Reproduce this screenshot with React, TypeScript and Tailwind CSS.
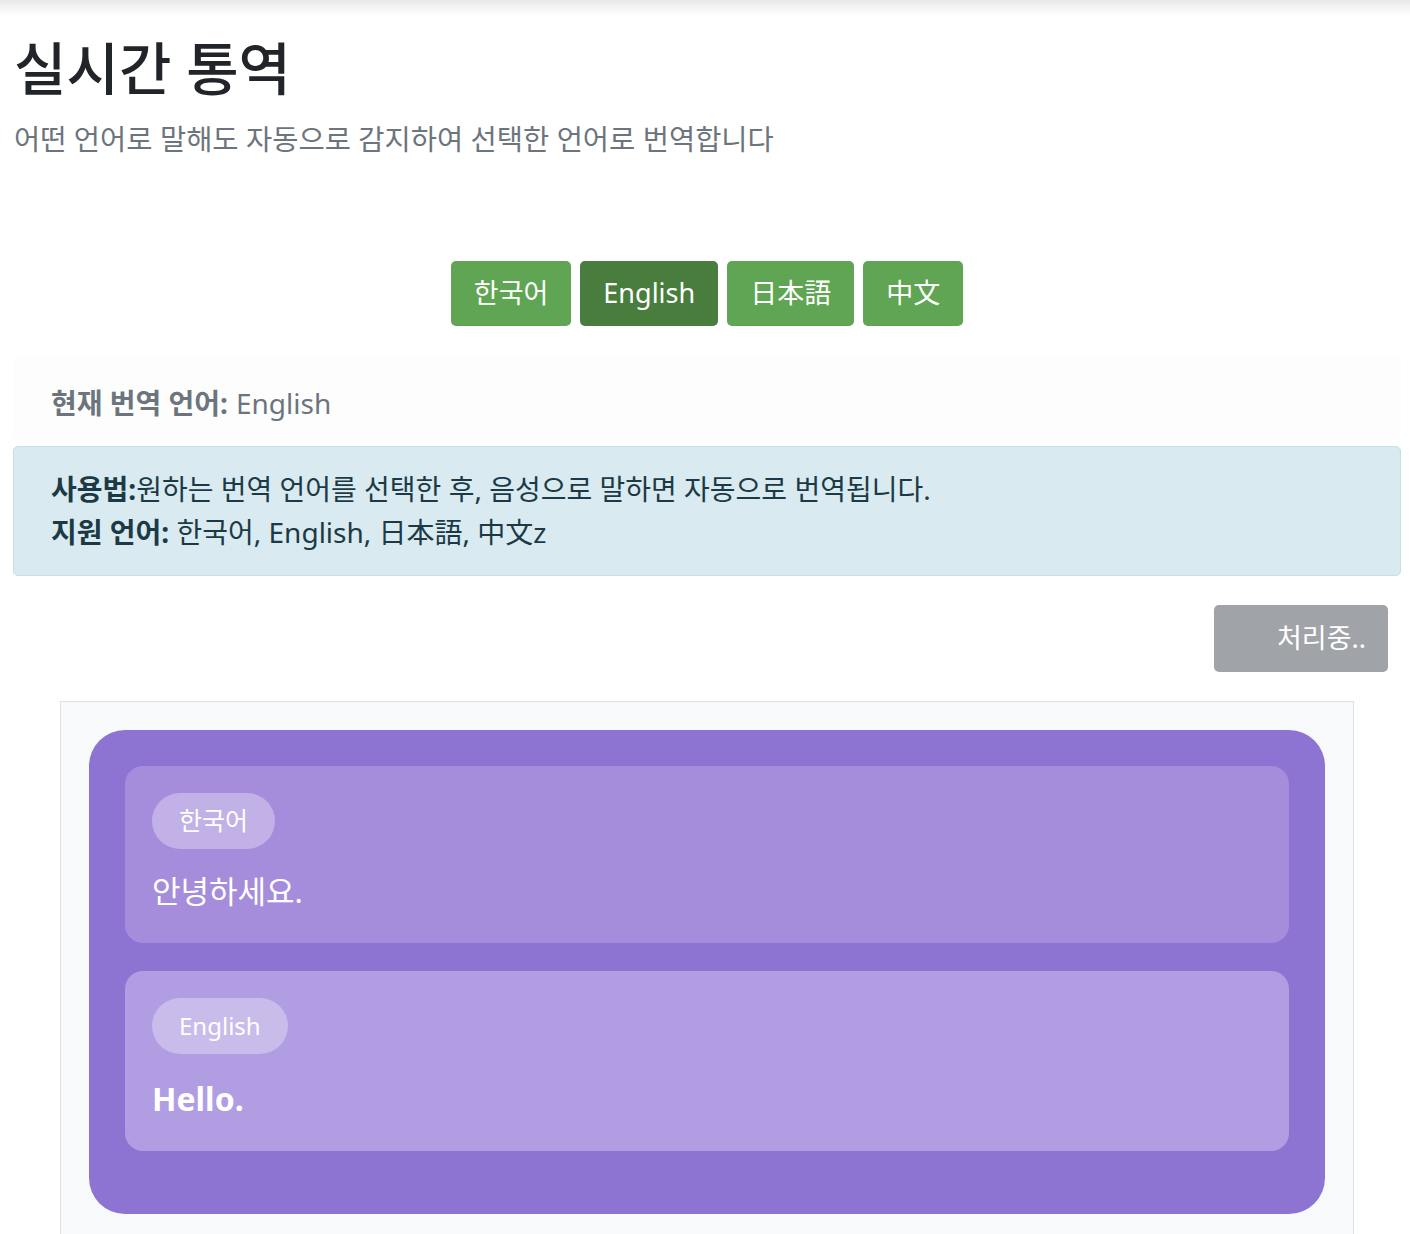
import React, { useState } from 'react';

const LANGS = ['한국어', 'English', '日本語', '中文'];

export default function App() {
  const [lang, setLang] = useState('English');

  return (
    <div
      className="min-h-[1234px] bg-white text-[#212529]"
      style={{ fontFamily: '"Noto Sans", "Noto Sans CJK KR", sans-serif' }}
    >
      {/* 상단 그림자 */}
      <div className="h-[16px] bg-gradient-to-b from-[#e8e8e8] to-white" />

      <div className="pl-[13px] pr-[9px]">
        {/* 제목 */}
        <h1 className="pl-[1px] mt-[20px] text-[57px] font-medium leading-[64px] text-[#212529]">
          실시간 통역
        </h1>
        <p className="pl-[1px] mt-[19px] text-[28.5px] leading-[40px] text-[#6c757d]">
          어떤 언어로 말해도 자동으로 감지하여 선택한 언어로 번역합니다
        </p>

        {/* 언어 선택 */}
        <div className="mt-[102px] flex justify-center gap-[9px]">
          {LANGS.map((l) => (
            <button
              key={l}
              onClick={() => setLang(l)}
              className={`h-[65px] px-[23px] rounded-[5px] text-[27px] text-white ${
                lang === l ? 'bg-[#487d3e]' : 'bg-[#5fa553]'
              }`}
            >
              {l}
            </button>
          ))}
        </div>

        {/* 현재 언어 */}
        <div className="mt-[29px] h-[85px] flex items-center pt-[10px] pl-[38px] bg-[#fdfdfd] rounded-[5px] text-[28px] text-[#6c757d]">
          <span className="font-bold">현재 번역 언어:</span>
          <span className="ml-[8px]">{lang}</span>
        </div>

        {/* 사용법 */}
        <div className="mt-[6px] h-[130px] flex flex-col justify-center pl-[37px] bg-[#d9eaf0] border border-[#c6dfe7] rounded-[5px] text-[28px] leading-[43px] text-[#1c3a45]">
          <p>
            <span className="font-bold">사용법:</span>원하는 번역 언어를 선택한 후, 음성으로 말하면 자동으로 번역됩니다.
          </p>
          <p>
            <span className="font-bold">지원 언어:</span> 한국어, English, 日本語, 中文z
          </p>
        </div>

        {/* 처리 버튼 */}
        <div className="mt-[29px] flex justify-end pr-[13px]">
          <button
            disabled
            className="h-[67px] w-[174px] pr-[22px] rounded-[5px] bg-[#a0a4a8] text-[27px] text-white text-right"
          >
            처리중..
          </button>
        </div>

        {/* 결과 */}
        <div className="mt-[29px] mx-[47px] bg-[#f8f9fa] border border-[#dee2e6] border-b-0 px-[28px] pt-[28px] pb-[30px]">
          <div className="bg-[#8e74d2] rounded-[36px] px-[36px] pt-[36px] pb-[63px] flex flex-col gap-[28px]">
            <div className="bg-[#a58ddb] rounded-[18px] p-[27px] pb-[31px]">
              <span className="inline-flex items-center h-[56px] px-[27px] rounded-full bg-[#c2b1e7] text-[25px] text-white">
                한국어
              </span>
              <p className="mt-[21px] text-[31px] leading-[42px] text-white">안녕하세요.</p>
            </div>
            <div className="bg-[#b19de2] rounded-[18px] p-[27px] pb-[31px]">
              <span className="inline-flex items-center h-[56px] px-[27px] rounded-full bg-[#c9bbea] text-[24px] text-white">
                English
              </span>
              <p className="mt-[24px] text-[32px] leading-[42px] font-bold text-white">Hello.</p>
            </div>
          </div>
        </div>
      </div>
    </div>
  );
}
